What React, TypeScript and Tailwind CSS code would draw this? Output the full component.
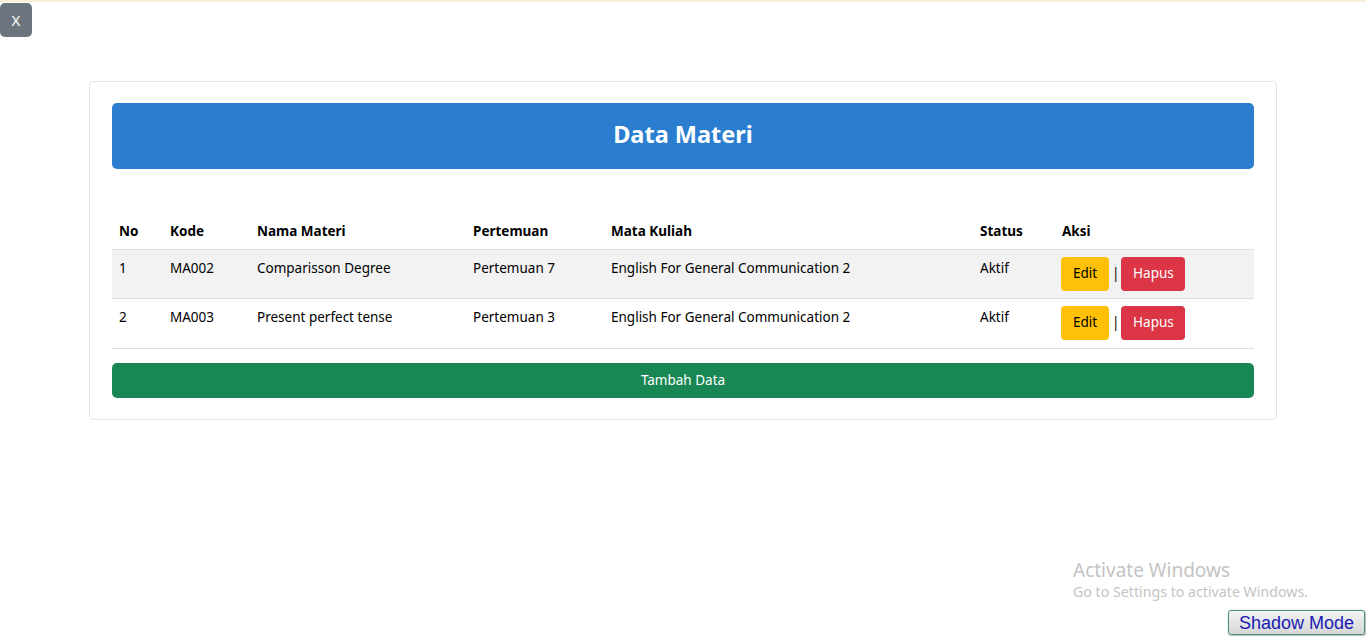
import React from "react";

const rows = [
  { no: "1", kode: "MA002", nama: "Comparisson Degree", pert: "Pertemuan 7", mk: "English For General Communication 2", status: "Aktif" },
  { no: "2", kode: "MA003", nama: "Present perfect tense", pert: "Pertemuan 3", mk: "English For General Communication 2", status: "Aktif" },
];

export default function App() {
  return (
    <div className="relative w-[1366px] h-[636px] bg-white overflow-hidden" style={{ fontFamily: '"Noto Sans", "Open Sans", sans-serif' }}>
      <div className="h-[2px] w-full bg-[#f7efd9]" />
      <button className="absolute left-0 top-[3px] w-[32px] h-[34px] rounded-[5px] bg-[#6c757d] text-white text-[15px] flex items-center justify-center">X</button>

      <div className="pt-[79px] px-[89px]">
        <div className="border border-[#e3e3e3] rounded-[5px] px-[22px] pt-[21px] pb-[21px]">
          <div className="h-[66px] rounded-[5px] bg-[#2b7ecf] flex items-center justify-center text-white text-[23.5px] font-bold pb-[2px]">Data Materi</div>
          <table className="w-full mt-[46px] text-[13.5px] text-black border-collapse">
            <thead>
              <tr className="h-[34px] border-b border-[#dedede]">
                <th className="w-[51px] text-left font-bold pl-[7px] align-top pt-[6px]">No</th>
                <th className="w-[87px] text-left font-bold pl-[7px] align-top pt-[6px]">Kode</th>
                <th className="w-[216px] text-left font-bold pl-[7px] align-top pt-[6px]">Nama Materi</th>
                <th className="w-[138px] text-left font-bold pl-[7px] align-top pt-[6px]">Pertemuan</th>
                <th className="w-[369px] text-left font-bold pl-[7px] align-top pt-[6px]">Mata Kuliah</th>
                <th className="w-[82px] text-left font-bold pl-[7px] align-top pt-[6px]">Status</th>
                <th className="text-left font-bold pl-[7px] align-top pt-[6px]">Aksi</th>
              </tr>
            </thead>
            <tbody>
              {rows.map((r, i) => (
                <tr key={r.no} className={`border-b border-[#dedede] ${i === 0 ? "bg-[#f2f2f2] h-[49px]" : "bg-white h-[50px]"}`}>
                  <td className="pl-[7px] align-top pt-[8px]">{r.no}</td>
                  <td className="pl-[7px] align-top pt-[8px]">{r.kode}</td>
                  <td className="pl-[7px] align-top pt-[8px]">{r.nama}</td>
                  <td className="pl-[7px] align-top pt-[8px]">{r.pert}</td>
                  <td className="pl-[7px] align-top pt-[8px]">{r.mk}</td>
                  <td className="pl-[7px] align-top pt-[8px]">{r.status}</td>
                  <td className="pl-[6px] align-top pt-[7px]">
                    <div className="flex items-center">
                      <button className="h-[34px] w-[48px] rounded-[4px] bg-[#ffc107] text-black text-[13.5px]">Edit</button>
                      <span className="ml-[3px] mr-[2px]">|</span>
                      <button className="h-[34px] w-[64px] rounded-[4px] bg-[#dc3545] text-white text-[13.5px]">Hapus</button>
                    </div>
                  </td>
                </tr>
              ))}
            </tbody>
          </table>
          <button className="mt-[14px] w-full h-[35px] rounded-[5px] bg-[#198754] text-white text-[13.5px]">Tambah Data</button>
        </div>
      </div>

      <div className="absolute left-[1073px] top-[558px] text-[#c4c4c4]">
        <div className="text-[19px] leading-[24px]">Activate Windows</div>
        <div className="text-[14.2px] leading-[20px]">Go to Settings to activate Windows.</div>
      </div>
      <button
        className="absolute left-[1228px] top-[610px] w-[137px] h-[25px] rounded-[3px] border border-[#4c8f8a] text-[#1b1bb3] text-[18px] leading-[22px] bg-gradient-to-b from-[#f4f4f4] to-[#d6d6d6] shadow-[1px_1px_3px_rgba(0,0,0,0.4)]"
        style={{ fontFamily: '"Liberation Sans", Arial, sans-serif' }}
      >
        Shadow Mode
      </button>
    </div>
  );
}
